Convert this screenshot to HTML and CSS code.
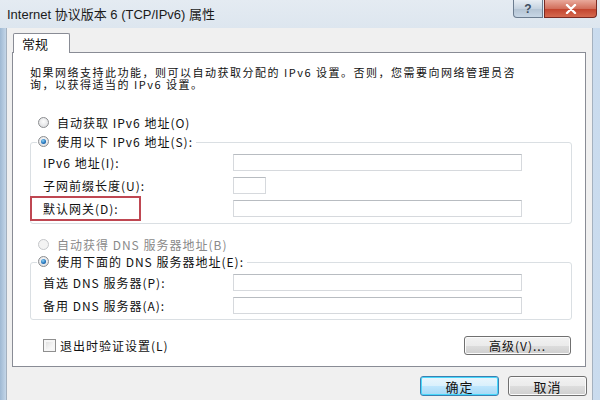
FILE: index.html
```html
<!DOCTYPE html>
<html lang="zh-CN">
<head>
    <meta charset="UTF-8">
    <title>Internet 协议版本 6 (TCP/IPv6) 属性</title>
    <link rel="stylesheet" href="styles.css">
</head>
<body>

    <div class="window">
        <div class="titlebar">
            <span class="title">Internet 协议版本 6 (TCP/IPv6) 属性</span>
            <div class="caption-btns">
                <span class="cap help">?</span>
                <span class="cap close">
                    <svg width="12" height="10" viewBox="0 0 12 10"><path d="M2 1 L10 9 M10 1 L2 9" stroke="#fff" stroke-width="2.4" stroke-linecap="round"/></svg>
                </span>
            </div>
        </div>

        <div class="client">
            <div class="tabs"><span class="tab">常规</span></div>

            <div class="panel">
                <div class="desc">
                    <div class="desc-line">如果网络支持此功能，则可以自动获取分配的 IPv6 设置。否则，您需要向网络管理员咨</div>
                    <div class="desc-line">询，以获得适当的 IPv6 设置。</div>
                </div>

                <div class="radio-row"><span class="radio"></span>自动获取 IPv6 地址(O)</div>

                <div class="group">
                    <div class="group-head"><span class="radio on"></span>使用以下 IPv6 地址(S):</div>
                    <div class="field"><span class="field-label">IPv6 地址(I):</span><span class="input"></span></div>
                    <div class="field"><span class="field-label">子网前缀长度(U):</span><span class="input short"></span></div>
                    <div class="field"><span class="field-label">默认网关(D):</span><span class="input"></span></div>
                    <div class="mark"></div>
                </div>

                <div class="radio-row disabled"><span class="radio"></span>自动获得 DNS 服务器地址(B)</div>

                <div class="group group-dns">
                    <div class="group-head"><span class="radio on"></span>使用下面的 DNS 服务器地址(E):</div>
                    <div class="field"><span class="field-label">首选 DNS 服务器(P):</span><span class="input"></span></div>
                    <div class="field"><span class="field-label">备用 DNS 服务器(A):</span><span class="input"></span></div>
                </div>

                <div class="bottom-row">
                    <div class="check-row"><span class="checkbox"></span>退出时验证设置(L)</div>
                    <span class="btn btn-adv">高级(V)...</span>
                </div>
            </div>

            <div class="dlg-buttons">
                <span class="btn default">确定</span>
                <span class="btn">取消</span>
            </div>
        </div>
    </div>

</body>
</html>
```

FILE: styles.css
```css
body {
    margin: 0;
    font-family: "Noto Sans CJK SC", sans-serif;
    font-size: 12px;
    color: #111;
}
.window {
    width: 600px;
    height: 400px;
    display: flex;
    flex-direction: column;
    background: linear-gradient(90deg, #9fb9d3 0, #c4d6e8 6px, #dbe6f1 40%, #e9eff5 70%, #c9dbee 100%);
    overflow: hidden;
}
.titlebar {
    height: 28px;
    flex-shrink: 0;
    display: flex;
    justify-content: space-between;
    align-items: flex-start;
    background: linear-gradient(180deg, #e4ebf2 0, #dde6ef 100%);
}
.title {
    font-family: "Liberation Sans", "Noto Sans CJK SC", sans-serif;
    font-size: 13px;
    color: #1b1b1b;
    margin: 6px 0 0 7px;
    line-height: 18px;
}
.caption-btns {
    display: flex;
    gap: 1px;
    margin-right: 3px;
}
.cap {
    height: 18px;
    display: flex;
    align-items: center;
    justify-content: center;
    border: 1px solid #6c7d90;
    border-top: none;
    box-sizing: border-box;
}
.help {
    width: 30px;
    border-radius: 0 0 0 4px;
    background: linear-gradient(180deg, #e8eef4 0, #c6d3e0 50%, #b3c3d3 51%, #c7d6e5 100%);
    color: #3d4d60;
    font-family: "Liberation Sans", sans-serif;
    font-weight: bold;
    font-size: 12px;
}
.close {
    width: 53px;
    border-radius: 0 0 4px 0;
    border-color: #7a2a22;
    background: linear-gradient(180deg, #e9a99b 0, #d26f5c 50%, #c1422c 51%, #d5694f 100%);
}
.client {
    flex: 1;
    margin: 0 7px 0 6px;
    background: #f0f0f0;
    border-left: 1px solid #a4b1bf;
    border-right: 1px solid #a4b1bf;
    display: flex;
    flex-direction: column;
}
.tabs {
    height: 25px;
    box-sizing: border-box;
    padding: 5px 0 0 6px;
    display: flex;
}
.tab {
    position: relative;
    z-index: 1;
    width: 57px;
    height: 20px;
    box-sizing: border-box;
    border: 1px solid #898c95;
    border-bottom: none;
    border-radius: 2px 2px 0 0;
    background: #fff;
    font-size: 13px;
    line-height: 19px;
    padding-left: 8px;
}
.panel {
    margin: -1px 6px 0 5px;
    border: 1px solid #898c95;
    background: #fff;
    padding: 0 13px 11px 17px;
    display: flex;
    flex-direction: column;
}
.desc {
    margin-top: 13px;
    display: flex;
    flex-direction: column;
}
.desc-line {
    height: 12px;
    line-height: 12px;
    font-size: 11px;
    letter-spacing: 1.5px;
    white-space: nowrap;
}
.radio-row {
    margin-top: 23px;
    height: 18px;
    display: flex;
    align-items: center;
    padding-left: 8px;
    letter-spacing: 1px;
}
.radio-row.disabled {
    margin-top: 11px;
    color: #8a8a8a;
}
.radio {
    width: 11px;
    height: 11px;
    box-sizing: border-box;
    border-radius: 50%;
    border: 1px solid #8b8d90;
    background: radial-gradient(circle at 50% 40%, #fdfdfd 0, #e2e3e5 70%, #cfd1d4 100%);
    margin-right: 8px;
    display: flex;
    align-items: center;
    justify-content: center;
    flex-shrink: 0;
}
.radio.on::after {
    content: "";
    width: 5px;
    height: 5px;
    border-radius: 50%;
    background: radial-gradient(circle at 40% 35%, #8ed2f5 0, #1f6fb8 60%, #114c8a 100%);
}
.disabled .radio {
    border-color: #c5c7ca;
    background: #f3f3f3;
}
.group {
    position: relative;
    margin-top: 11px;
    border: 1px solid #dadfe3;
    border-radius: 3px;
    padding-bottom: 3px;
    display: flex;
    flex-direction: column;
}
.group-dns {
    margin-top: 9px;
    padding-bottom: 2px;
}
.group-head {
    align-self: flex-start;
    margin: -11px 0 1px 6px;
    height: 18px;
    display: flex;
    align-items: center;
    background: #fff;
    padding: 0 3px 0 1px;
    letter-spacing: 1px;
}
.field {
    height: 23px;
    flex-shrink: 0;
    display: flex;
    align-items: center;
    padding-left: 12px;
    letter-spacing: 1px;
}
.field-label {
    width: 190px;
    flex-shrink: 0;
}
.input {
    width: 289px;
    height: 17px;
    box-sizing: border-box;
    border: 1px solid #d6d9dd;
    border-top-color: #b8bcc1;
    background: #fff;
}
.input.short {
    width: 33px;
}
.mark {
    position: absolute;
    left: -1px;
    top: 53px;
    width: 111px;
    height: 25px;
    box-sizing: border-box;
    border: 2px solid #bf4752;
}
.bottom-row {
    margin-top: 16px;
    height: 19px;
    display: flex;
    justify-content: space-between;
    align-items: center;
    padding-right: 1px;
}
.check-row {
    display: flex;
    align-items: center;
    padding-left: 13px;
    letter-spacing: 1px;
}
.checkbox {
    width: 13px;
    height: 13px;
    box-sizing: border-box;
    border: 1px solid #8f8f8f;
    background: linear-gradient(135deg, #d9d9d9 0, #f4f4f4 60%, #fff 100%);
    box-shadow: inset 0 0 0 2px #f6f6f6;
    margin-right: 4px;
}
.btn {
    height: 20px;
    width: 79px;
    box-sizing: border-box;
    border: 1px solid #707070;
    border-radius: 3px;
    background: linear-gradient(180deg, #f2f2f2 0, #ebebeb 50%, #dddddd 51%, #cfcfcf 100%);
    box-shadow: inset 0 0 0 1px #fbfbfb;
    display: flex;
    align-items: center;
    justify-content: center;
    font-size: 13px;
    letter-spacing: 1px;
}
.btn-adv {
    width: 107px;
    height: 19px;
    font-size: 12px;
}
.btn.default {
    border-color: #3c7fb1;
    background: linear-gradient(180deg, #eaf6fd 0, #d9f0fc 50%, #bee6fd 51%, #a7d9f5 100%);
    box-shadow: inset 0 0 0 1px #48d8fb;
}
.dlg-buttons {
    margin-top: 9px;
    display: flex;
    justify-content: flex-end;
    gap: 9px;
    padding-right: 5px;
}
```
